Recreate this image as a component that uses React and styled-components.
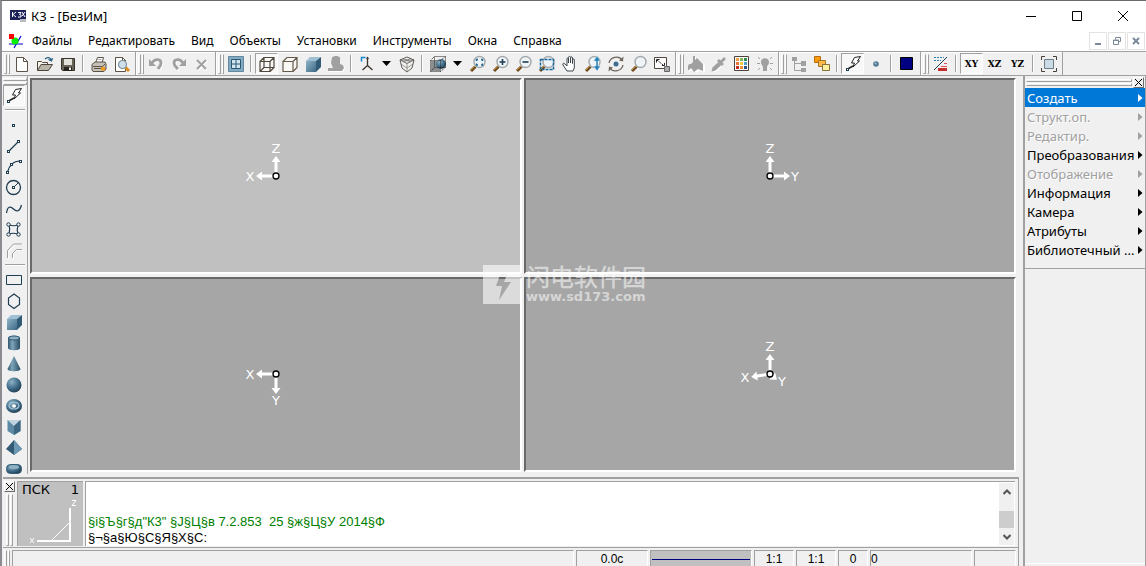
import React, { useState } from "react";
import styled, { createGlobalStyle, ThemeProvider } from "styled-components";

const theme = {
  face: "#f0f0f0",
  shadow: "#a0a0a0",
  darkShadow: "#696969",
  light: "#ffffff",
  highlight: "#0078d7",
  silver: "#c0c0c0",
  viewGrey: "#a6a6a6",
  disabled: "#a0a0a0",
  ui: `"Noto Sans", "Noto Sans CJK SC", sans-serif`,
  arial: `"Liberation Sans", Arial, sans-serif`
};

const GlobalStyle = createGlobalStyle`
  *,
  *::before,
  *::after {
    box-sizing: border-box;
  }

  body {
    margin: 0;
    overflow: hidden;
  }

  button {
    margin: 0;
    padding: 0;
    border: 0;
    background: none;
    color: inherit;
    font: inherit;
  }

  svg {
    display: block;
    flex: none;
  }
`;

const Window = styled.div`
  display: flex;
  flex-direction: column;
  height: 100vh;
  border-top: 1px solid #6a6a66;
  border-left: 2px solid #8c8c90;
  background: ${props => props.theme.face};
  color: #000;
  font-family: ${props => props.theme.ui};
  font-size: 12px;
`;

const TitleBar = styled.header`
  display: flex;
  align-items: center;
  height: 29px;
  padding-left: 8px;
  background: ${props => props.theme.light};

  h1 {
    flex: 1;
    margin: 0 0 0 5px;
    font-size: 13px;
    font-weight: 400;
  }
`;

const CaptionButton = styled.button`
  display: flex;
  align-items: center;
  justify-content: center;
  width: 46px;
  height: 29px;
`;

const MenuBar = styled.nav`
  display: flex;
  align-items: center;
  height: 21px;
  padding-left: 6px;
  background: ${props => props.theme.light};
`;

const MenuItem = styled.button`
  height: 21px;
  padding: 0 8px;
  line-height: 21px;
`;

const MenuSpacer = styled.div`
  flex: 1;
`;

const MdiButton = styled.button`
  display: flex;
  align-items: center;
  justify-content: center;
  width: 18px;
  height: 18px;
  margin-right: 1px;
  border: 1px solid #e3e3e3;
`;

const ToolBar = styled.div`
  display: flex;
  height: 25px;
  border-top: 1px solid ${props => props.theme.shadow};
  border-bottom: 1px solid ${props => props.theme.shadow};
`;

const ToolGroup = styled.div`
  display: flex;
  align-items: center;
  padding: 0 2px;
  border-right: 1px solid ${props => props.theme.shadow};
  box-shadow: inset 1px 1px 0 ${props => props.theme.light};
`;

const Grip = styled.div`
  display: flex;
  flex-direction: ${props => (props.$flat ? "column" : "row")};
  flex: ${props => (props.$grow ? "1" : "none")};
  gap: 1px;

  &::before,
  &::after {
    content: "";
    width: ${props => (props.$flat ? "100%" : "3px")};
    height: ${props => (props.$flat ? "3px" : "100%")};
    border: 1px solid;
    border-color: ${props => props.theme.light} ${props => props.theme.shadow}
      ${props => props.theme.shadow} ${props => props.theme.light};
  }
`;

const BarGrip = styled(Grip)`
  width: 6px;
  height: 20px;
`;

const ToolSeparator = styled.div`
  width: 8px;
  height: 17px;
  padding: 0 3px;

  &::before {
    content: "";
    display: block;
    width: 2px;
    height: 100%;
    border-left: 1px solid ${props => props.theme.shadow};
    border-right: 1px solid ${props => props.theme.light};
  }
`;

const ToolButton = styled.button`
  display: flex;
  align-items: center;
  justify-content: center;
  width: ${props => (props.$narrow ? "17px" : "23px")};
  height: 21px;
  border: 1px solid transparent;
  font-family: "DejaVu Serif", serif;
  font-size: 9px;
  font-weight: 700;

  &[aria-pressed="true"] {
    border-color: ${props => props.theme.shadow} ${props => props.theme.light}
      ${props => props.theme.light} ${props => props.theme.shadow};
    background: #f8f8f8;
  }
`;

const Body = styled.div`
  display: flex;
  flex: 1;
  min-height: 0;
`;

const Workspace = styled.main`
  display: flex;
  flex: 1;
  flex-direction: column;
  min-width: 0;
  padding-left: 1px;
`;

const Drawing = styled.div`
  display: flex;
  flex: 1;
  min-height: 0;
`;

const SideTools = styled.div`
  width: 25px;
  margin-bottom: 3px;
  padding-top: 2px;
  overflow: hidden;
  border-right: 1px solid ${props => props.theme.shadow};

  ${ToolButton} {
    width: 22px;
  }
`;

const SideSeparator = styled.div`
  width: 20px;
  height: 8px;
  margin-left: 2px;
  padding-top: 3px;

  &::before {
    content: "";
    display: block;
    height: 2px;
    border-top: 1px solid ${props => props.theme.shadow};
    border-bottom: 1px solid ${props => props.theme.light};
  }
`;

const Views = styled.div`
  position: relative;
  display: grid;
  flex: 1;
  grid-template-columns: 1fr 1fr;
  grid-template-rows: 1fr 1fr;
  gap: 3px 2px;
  margin: 2px 3px 5px 2px;
`;

const View = styled.section`
  display: flex;
  align-items: center;
  justify-content: center;
  overflow: hidden;
  border: 2px solid;
  border-color: ${props => props.theme.darkShadow} ${props => props.theme.light}
    ${props => props.theme.light} ${props => props.theme.darkShadow};
  background: ${props => (props.$active ? props.theme.silver : props.theme.viewGrey)};
`;

// sits over the crossing of the four views
const Watermark = styled.div`
  position: absolute;
  top: calc(50% - 12px);
  left: calc(50% - 40px);
  display: flex;
  align-items: center;
  gap: 5px;
  color: rgba(255, 255, 255, 0.55);
  font-family: "Noto Sans CJK SC", sans-serif;
  font-size: 24px;
  font-weight: 500;
  line-height: 26px;
  pointer-events: none;

  small {
    display: block;
    font-family: "DejaVu Sans", sans-serif;
    font-size: 13px;
    font-weight: 700;
    line-height: 16px;
  }
`;

const Console = styled.section`
  display: flex;
  height: 71px;
  padding: 2px 3px 1px 1px;
  border-top: 2px solid ${props => props.theme.shadow};
  border-bottom: 1px solid ${props => props.theme.shadow};
  border-right: 1px solid ${props => props.theme.shadow};
`;

const ConsoleHandle = styled.div`
  display: flex;
  flex-direction: column;
  align-items: center;
  gap: 2px;
  width: 11px;
  margin-right: 2px;
`;

const ConsoleGrip = styled(Grip)`
  flex: 1;
`;

const CloseButton = styled.button`
  display: flex;
  align-items: center;
  justify-content: center;
  width: 11px;
  height: 11px;
  border: 1px solid;
  border-color: ${props => props.theme.light} ${props => props.theme.darkShadow}
    ${props => props.theme.darkShadow} ${props => props.theme.light};
`;

const PlaneBox = styled.div`
  width: 66px;
  padding: 0 4px 0 4px;
  border-top: 1px solid ${props => props.theme.shadow};
  border-left: 1px solid ${props => props.theme.shadow};
  background: ${props => props.theme.silver};
  font-family: "DejaVu Sans", sans-serif;
  font-size: 13px;
  line-height: 15px;

  div {
    display: flex;
    justify-content: space-between;
  }

  svg {
    margin-left: 7px;
  }
`;

const LogBox = styled.div`
  display: flex;
  flex: 1;
  margin-left: 2px;
  border-top: 1px solid ${props => props.theme.shadow};
  border-left: 1px solid ${props => props.theme.shadow};
  background: ${props => props.theme.light};
`;

const LogLines = styled.div`
  display: flex;
  flex: 1;
  flex-direction: column;
  justify-content: flex-end;
  padding-left: 2px;
  font-family: ${props => props.theme.arial};
  font-size: 13px;
  line-height: 16px;
  white-space: pre;
`;

const LogLine = styled.p`
  margin: 0;
  color: ${props => (props.$info ? "#008000" : "#000")};
`;

const ScrollTrack = styled.div`
  display: flex;
  flex-direction: column;
  width: 15px;
  margin: 1px 1px 1px 0;
  background: ${props => props.theme.face};

  &::before {
    content: "";
    order: 1;
    flex: 1;
  }
`;

const ScrollButton = styled.button`
  display: flex;
  align-items: center;
  justify-content: center;
  order: ${props => (props.$down ? 3 : 0)};
  height: 17px;
`;

const ScrollThumb = styled.div`
  order: 2;
  height: 17px;
  background: #cdcdcd;
`;

const StatusBar = styled.footer`
  display: flex;
  gap: 2px;
  height: 18px;
  padding: 2px 2px 0 1px;
  border-right: 1px solid ${props => props.theme.shadow};
  font-family: ${props => props.theme.arial};
  font-size: 12px;
  line-height: 16px;
`;

const StatusCell = styled.div`
  flex: ${props => (props.$grow ? "1" : "none")};
  width: ${props => props.$width || "auto"};
  border: 1px solid;
  border-bottom: 0;
  border-color: ${props => props.theme.shadow} ${props => props.theme.light}
    ${props => props.theme.light} ${props => props.theme.shadow};
  text-align: ${props => (props.$left ? "left" : "center")};
`;

const LineSample = styled(StatusCell)`
  padding: 8px 1px 0;
  background: ${props => props.theme.silver};

  &::before {
    content: "";
    display: block;
    height: 1px;
    background: #000080;
  }
`;

const CommandPanel = styled.aside`
  display: flex;
  flex-direction: column;
  width: 123px;
  margin-left: 4px;
  padding-top: 1px;
  border-left: 2px solid ${props => props.theme.shadow};
  border-right: 1px solid ${props => props.theme.shadow};
`;

const PanelHead = styled.div`
  display: flex;
  align-items: center;
  gap: 1px;
  height: 11px;
  padding: 0 1px;
`;

const CommandList = styled.ul`
  margin: 0;
  padding: 0 0 9px;
  border-bottom: 1px solid ${props => props.theme.shadow};
  list-style: none;
`;

const CommandButton = styled.button`
  display: flex;
  align-items: center;
  justify-content: space-between;
  width: 100%;
  height: 19px;
  padding: 0 2px;
  font-size: 13px;
  line-height: 18px;
  white-space: nowrap;

  &:disabled {
    color: ${props => props.theme.disabled};
    text-shadow: 1px 1px 0 ${props => props.theme.light};
  }

  &[aria-current="true"] {
    background: ${props => props.theme.highlight};
    color: ${props => props.theme.light};
  }
`;

const PanelFoot = styled.div`
  margin-top: auto;
  height: 3px;
  border-top: 1px solid ${props => props.theme.light};
`;

const Svg = ({ size = 18, children }) => (
  <svg width={size} height={size} viewBox="0 0 18 18" fill="none" aria-hidden="true">
    {children}
  </svg>
);

const Lens = ({ children }) => (
  <Svg>
    <path d="M6.5 11.5 2 16" stroke="#6d4a1c" strokeWidth="3" />
    <path d="M6 11 2 15" stroke="#c08a3c" strokeWidth="1" />
    <circle cx="10.5" cy="7" r="5.5" fill="#eef4f7" stroke="#a3a8ab" strokeWidth="1.4" />
    {children}
  </Svg>
);

const Node = ({ x, y }) => (
  <rect x={x - 1.5} y={y - 1.5} width="2" height="2" fill="#fff" stroke="#1f3d50" />
);

const icons = {
  fresh: (
    <Svg>
      <path d="M3.5 2.5h7l4 4v10h-11z" fill="#fff" stroke="#5b5346" />
      <path d="M10.5 2.5v4h4" stroke="#5b5346" />
    </Svg>
  ),
  open: (
    <Svg>
      <path d="M1.5 15.5V6.5h4l1 1h5v2.5" fill="#f5f3ee" stroke="#4d473d" />
      <path d="m1.5 15.5 3.500-6h11.500l-4 6z" fill="#b9b4a8" stroke="#4d473d" />
      <path d="M9 4c2-2 5-2 6 1M12.500 4.500l3 1.500 1-3" stroke="#1f5b7c" strokeWidth="1.200" />
    </Svg>
  ),
  save: (
    <Svg>
      <path d="M2.500 3.500h13v12h-12l-1-1z" fill="#686258" stroke="#38332b" />
      <path d="M5 4h8v6H5z" fill="#e3e1dc" />
      <path d="M5 12h8v4H5z" fill="#26221c" />
      <path d="M10 12.500h2V15h-2z" fill="#eee" />
    </Svg>
  ),
  print: (
    <Svg>
      <path d="m5.500 8 2-5.500h6l-1.500 5.500" fill="#fff" stroke="#5b5346" />
      <path d="m2 9.500 3-2.500h10l1 2v5l-2 2.500H3l-1-1.500z" fill="#c5c1b8" stroke="#5b5346" />
      <path d="M3 11.500h9.500L15 9M4 13.500h8" stroke="#5b5346" />
      <path d="M11 12h4v3.500h-4z" fill="#f39a1e" />
      <path d="M7.500 4.500h4M7 6.500h4" stroke="#aaa" />
    </Svg>
  ),
  preview: (
    <Svg>
      <path d="M2.500 2.500h7l3 3v11h-10z" fill="#fff" stroke="#5b5346" />
      <path d="M9.500 2.500v3h3" stroke="#5b5346" />
      <path d="m12 12 4 4" stroke="#db8b1b" strokeWidth="3" />
      <circle cx="9.500" cy="9.500" r="4" fill="#cfe0ea" stroke="#7c93a0" strokeWidth="1.200" />
    </Svg>
  ),
  undo: (
    <Svg>
      <path d="M5 8c3-5 9-4 9 0 0 3-2 4-3 6" stroke="#fff" strokeWidth="2.500" transform="translate(1 1)" />
      <path d="M5 8c3-5 9-4 9 0 0 3-2 4-3 6" stroke="#a0a0a0" strokeWidth="2.800" />
      <path d="M2 4v7h7z" fill="#a0a0a0" />
    </Svg>
  ),
  redo: (
    <Svg>
      <path d="M13 8C10 3 4 4 4 8c0 3 2 4 4 6" stroke="#fff" strokeWidth="2.500" transform="translate(1 1)" />
      <path d="M13 8C10 3 4 4 4 8c0 3 2 4 4 6" stroke="#a0a0a0" strokeWidth="2.800" />
      <path d="M16 4v7H9z" fill="#a0a0a0" />
    </Svg>
  ),
  remove: (
    <Svg>
      <path d="m5 6 9 9m0-9-9 9" stroke="#fff" strokeWidth="2" />
      <path d="m4 5 9 9m0-9-9 9" stroke="#a0a0a0" strokeWidth="2" />
    </Svg>
  ),
  window: (
    <Svg>
      <path d="M1.500 1.500h15v15h-15z" fill="#85abc2" stroke="#6387a0" />
      <path d="M4.500 4.500h9v9h-9zM9 4.500v9M4.500 9h9" fill="#d3e5ee" stroke="#275875" />
    </Svg>
  ),
  wire: (
    <Svg>
      <path d="M2 6.500h10v10H2zM6 2.500h10v10H6zM2 6.500l4-4m6 4 4-4m-4 14 4-4m-14 4 4-4" stroke="#51483d" strokeWidth="1.200" />
    </Svg>
  ),
  box: (
    <Svg>
      <path d="M2 6.500h10v10H2zM2 6.500l4-4h10v10l-4 4m0-10 4-4" fill="#f9f8f5" stroke="#655a4a" strokeWidth="1.200" />
    </Svg>
  ),
  cube: (
    <Svg>
      <path d="m2 6 4-4h11l-5 4z" fill="#9fc0d2" />
      <path d="M2 6h10v11H2z" fill="url(#steel)" />
      <path d="m12 6 5-4v10l-5 5z" fill="#315a74" />
    </Svg>
  ),
  shade: (
    <Svg>
      <path d="M5 3h8v6l4 1 1 3-2 4H2v-3h4V9L5 8z" fill="#fff" />
      <path d="M5 2.500c2-2 6-2 8 0V9l3 1 1 3-2 3H1v-3h5l-2-5z" fill="#a0a0a0" />
    </Svg>
  ),
  axes: (
    <Svg>
      <path d="M9.500 2v8.500L4.500 15m5-4.500 5 4.500" stroke="#3c342c" strokeWidth="1.300" />
      <path d="M3.500 6.500v-4h4" stroke="#1686ce" strokeWidth="1.500" />
      <path d="M8 4h3L9.500 1.500z" fill="#3c342c" />
    </Svg>
  ),
  drop: (
    <svg width="9" height="5" viewBox="0 0 9 5" aria-hidden="true">
      <path d="M0 0h9L4.500 5z" fill="#000" />
    </svg>
  ),
  gem: (
    <Svg>
      <path d="m2 5 7-3 7 3-2 8-5 4-5-4z" fill="#f2f2f0" stroke="#5f5d5a" />
      <path d="m2 5 7 3.500L16 5z" fill="#dcdcda" stroke="#5a5855" strokeWidth=".8" />
      <path d="M9 8.500V17M5.500 3.500l7 3.500m0-3.500L5.500 7M3 9l6 4 6-4" stroke="#77746f" strokeWidth=".7" />
    </Svg>
  ),
  dotted: (
    <Svg>
      <path d="M2 6h9v10H2z" fill="#8b8f92" />
      <circle cx="12" cy="9" r="5" fill="url(#ball)" />
      <path d="M1.500 5.500h10v11h-10zM5.500 1.500h11v11h-11zM1.500 5.500l4-4m6 4 5-4m-5 15 5-4m-15 4 4-4" stroke="#222" strokeDasharray="1 1" />
    </Svg>
  ),
  zoomFit: (
    <Lens>
      <path d="M7.500 6V4.500H9M12 4.500h1.500V6m0 2.500V10H12m-3 0H7.500V8.500" stroke="#1f6795" strokeWidth="1.400" />
    </Lens>
  ),
  zoomIn: (
    <Lens>
      <path d="M7.500 7h6m-3-3v6" stroke="#1c3d52" strokeWidth="1.600" />
    </Lens>
  ),
  zoomOut: (
    <Lens>
      <path d="M7.500 7h6" stroke="#1c3d52" strokeWidth="1.600" />
    </Lens>
  ),
  zoomArea: (
    <Lens>
      <path d="M2.500 4.500h13v10h-13z" stroke="#15679a" strokeWidth="1.500" strokeDasharray="3 1" />
    </Lens>
  ),
  hand: (
    <Svg>
      <path
        d="m6 16-4-6c-1-2 1-2 2-1l2 2V4c0-1.500 1.500-1.500 1.500 0v4V2.500c0-1.500 2-1.500 2 0V8 3c0-1.500 2-1.500 2 0v5.500V5c0-1.500 1.800-1.500 1.800 0v8L12 16z"
        fill="#fff"
        stroke="#39444b"
      />
    </Svg>
  ),
  zoomDrag: (
    <Lens>
      <path d="m13 1 3.500 5H14v5h2.500L13 16l-3.500-5H12V6H9.500z" fill="#2982b8" stroke="#e9f3f8" strokeWidth=".5" />
    </Lens>
  ),
  orbit: (
    <Svg>
      <path d="M2 8c1-6 10-8 13-3M16 10c-1 6-10 8-13 3" stroke="#6e675d" strokeWidth="1.300" />
      <path d="m16.500 1.500-.5 5-4-1zM1.500 16.500l.5-5 4 1z" fill="#6e675d" />
      <circle cx="9" cy="9" r="2.500" fill="#3b6e8f" />
    </Svg>
  ),
  zoomPlain: <Lens />,
  extent: (
    <Svg>
      <path d="M1.500 2.500h12v11h-12z" fill="#fcfcfa" stroke="#4f4941" />
      <path d="M11.500 11.500h5v5h-5z" fill="#aaa" stroke="#666" />
      <path d="m4 5 6 5" stroke="#222" strokeDasharray="2 1" />
      <path d="M3.500 7.500v-3h3M11.500 8v2.500H9" stroke="#222" />
    </Svg>
  ),
  bucket: (
    <Svg>
      <path d="m6 9 5-6 6 6v8l-5-2-4 2-3-4-2 2H1c0-5 1-6 5-6zM6 1h2v7H6z" fill="#fff" transform="translate(1 1)" />
      <path d="m4 9 6-6 6 6v7l-5-2-4 3-3-4-2 2H1c0-5 0-6 3-6zM6 1h2v7H6z" fill="#a0a0a0" />
    </Svg>
  ),
  pipette: (
    <Svg>
      <path d="m3 16 8-8" stroke="#fff" strokeWidth="3" transform="translate(1 1)" />
      <path d="m1.500 16.500 1-4 6-5.500 3 3-6 5.500z" fill="#a0a0a0" />
      <path d="m8 5 5 5m-2.500-2.500 4.500-4.500" stroke="#a0a0a0" strokeWidth="2.800" />
    </Svg>
  ),
  palette: (
    <Svg>
      <path d="M1.500 1.500h14v14h-14z" fill="#fff" stroke="#4d4339" />
      <path d="M3 3h3v3H3z" fill="#e9a14a" />
      <path d="M7 3h3v3H7z" fill="#7fb75d" />
      <path d="M11 3h3v3h-3z" fill="#2f8c4c" />
      <path d="M3 7h3v3H3z" fill="#e8743a" />
      <path d="M7 7h3v3H7z" fill="#efc93e" />
      <path d="M11 7h3v3h-3z" fill="#4ea0c7" />
      <path d="M3 11h3v3H3z" fill="#c72b22" />
      <path d="M7 11h3v3H7z" fill="#e9913b" />
      <path d="M11 11h3v3h-3z" fill="#2b4f86" />
    </Svg>
  ),
  bulb: (
    <Svg>
      <path d="M5 7c0-5 8-5 8 0 0 3-2 3-2 6v3H7v-3c0-3-2-3-2-6z" fill="#a0a0a0" />
      <path d="m2 2 2 2m12-2-2 2M1 8.500h3m10 0h3M2 15l2-2m12 2-2-2" stroke="#a0a0a0" />
    </Svg>
  ),
  tree: (
    <Svg>
      <path d="M4.500 6v9.500H12M4.500 8.500H12" stroke="#a0a0a0" />
      <path d="M2 2h5v4H2zM11 6h5v5h-5zM11 13h5v4h-5z" fill="#a0a0a0" />
    </Svg>
  ),
  layers: (
    <Svg>
      <path d="M1.500 1.500h6v6h-6z" fill="#ff9a0b" stroke="#b86c10" />
      <path d="M5.500 5.500h7v6h-7z" fill="#ffb84a" stroke="#a8742a" />
      <path d="M9.500 9.500h7v6h-7z" fill="#fff0a0" stroke="#857038" />
    </Svg>
  ),
  snap: (
    <Svg>
      <path d="m10.500 2.500 6-1-3 4.500h2L9 12l1.500-4h-3z" fill="#fff" stroke="#222" />
      <path d="M4.500 13.500 9 11" stroke="#222" strokeWidth="1.500" />
      <Node x={4} y={15} />
    </Svg>
  ),
  bead: (
    <Svg>
      <circle cx="9" cy="9" r="2.800" fill="#527c94" />
      <circle cx="8.500" cy="8.500" r="1" fill="#9bc3d6" />
    </Svg>
  ),
  navy: (
    <Svg>
      <path d="M2.500 2.500h12v12h-12z" fill="#000080" stroke="#000" />
    </Svg>
  ),
  lineStyle: (
    <Svg>
      <path d="M2 2.500h10M2 5.500h7" stroke="#2686ad" strokeDasharray="2 1" />
      <path d="m2 15 13-13" stroke="#1f3d50" />
      <path d="M12 8.500h3M9 11.500h6" stroke="#e05151" />
      <path d="M6 14.500h9" stroke="#c42d2d" strokeWidth="3" />
    </Svg>
  ),
  frame: (
    <Svg>
      <path d="M4.500 4.500h9v9h-9z" fill="#c9dce8" stroke="#6f7d84" />
      <path d="M1.500 5V1.500H5M13 1.500h3.500V5m0 8v3.500H13m-8 0H1.500V13" stroke="#453f36" />
    </Svg>
  ),
  point: (
    <Svg>
      <Node x={9} y={10} />
    </Svg>
  ),
  line: (
    <Svg>
      <path d="m4 14 9-9" stroke="#1f3d50" strokeWidth="1.200" />
      <Node x={4} y={15} />
      <Node x={14} y={5} />
    </Svg>
  ),
  arc: (
    <Svg>
      <path d="M2.500 14.500C4 8 8 3 15 3" stroke="#1f3d50" strokeWidth="1.200" />
      <Node x={3} y={15} />
      <Node x={7} y={7} />
      <Node x={16} y={4} />
    </Svg>
  ),
  circle: (
    <Svg>
      <circle cx="8.500" cy="8.500" r="7" stroke="#1f3d50" strokeWidth="1.300" />
      <path d="m9 8 4-4" stroke="#1f3d50" />
      <Node x={9} y={9} />
    </Svg>
  ),
  spline: (
    <Svg>
      <path d="M1.500 13c1-7 4-7 7-4s6 3 8-4" stroke="#1f3d50" strokeWidth="1.300" />
    </Svg>
  ),
  contour: (
    <Svg>
      <path d="M4 4q5 1.500 9 0-1.500 5 0 9-5-1.500-9 0 1.500-5 0-9z" stroke="#1f3d50" strokeWidth="1.200" />
      <g fill="#f0f0f0" stroke="#1f3d50">
        <circle cx="3.500" cy="3.500" r="1.700" />
        <circle cx="13.500" cy="3.500" r="1.700" />
        <circle cx="3.500" cy="13.500" r="1.700" />
        <circle cx="13.500" cy="13.500" r="1.700" />
      </g>
    </Svg>
  ),
  offset: (
    <Svg>
      <path d="M3.500 17V9.500l7-7H18M8.500 17v-5l4-4H18" stroke="#fff" />
      <path d="M2.500 16V8.500l6-6.500H17M7.500 16v-4.500l4-4H17" stroke="#a0a0a0" />
    </Svg>
  ),
  rect: (
    <Svg>
      <path d="M1.500 4.500h15v9h-15z" stroke="#1f3d50" />
    </Svg>
  ),
  hexagon: (
    <Svg>
      <path d="m9 2 5.500 4v6.500L9 16.500l-5.500-4V6z" stroke="#1f3d50" strokeWidth="1.200" />
    </Svg>
  ),
  cylinder: (
    <Svg>
      <path d="M3 4c0-3 12-3 12 0v10c0 3-12 3-12 0z" fill="url(#side)" />
      <ellipse cx="9" cy="4" rx="5.500" ry="2" fill="#8eb0c3" stroke="#315a74" />
    </Svg>
  ),
  cone: (
    <Svg>
      <path d="m9 1 6.500 13c0 3-13 3-13 0z" fill="url(#side)" />
    </Svg>
  ),
  sphere: (
    <Svg>
      <circle cx="9" cy="9" r="7.500" fill="url(#ball)" />
    </Svg>
  ),
  torus: (
    <Svg>
      <ellipse cx="9" cy="9" rx="8" ry="7" fill="url(#ball)" />
      <path d="M4 9c0-5 10-5 10 0-1 4-9 4-10 0z" stroke="#a4c4d5" strokeWidth="1.200" />
      <ellipse cx="9" cy="9" rx="2" ry="1.700" fill="#fff" />
    </Svg>
  ),
  prism: (
    <Svg>
      <path d="M2.500 2h13v11L9 17l-6.500-4z" fill="#5d89a4" />
      <path d="M2.500 2h13L9 8z" fill="#bfd4df" />
      <path d="M9 8v9l6.500-4V2z" fill="#3d6680" />
    </Svg>
  ),
  pyramid: (
    <Svg>
      <path d="m9 1 8 9-8 6-8-6z" fill="#315a74" />
      <path d="m9 1 8 9-8 6z" fill="#6c98b3" />
    </Svg>
  ),
  capsule: (
    <Svg>
      <rect x="1.500" y="4.500" width="15" height="9" rx="4" fill="url(#ball)" stroke="#315a74" />
      <ellipse cx="9" cy="7" rx="5" ry="2" fill="#8eb0c3" />
    </Svg>
  )
};

const Gradients = () => (
  <svg width="0" height="0" aria-hidden="true">
    <defs>
      <linearGradient id="steel" x1="0" y1="0" x2="1" y2="1">
        <stop offset="0" stopColor="#8db2c6" />
        <stop offset="1" stopColor="#3e6a87" />
      </linearGradient>
      <linearGradient id="side">
        <stop offset="0" stopColor="#32566c" />
        <stop offset=".35" stopColor="#7ea5ba" />
        <stop offset="1" stopColor="#284c62" />
      </linearGradient>
      <radialGradient id="ball" cx=".35" cy=".3" r=".75">
        <stop offset="0" stopColor="#8db2c6" />
        <stop offset=".6" stopColor="#3e6a87" />
        <stop offset="1" stopColor="#213f52" />
      </radialGradient>
    </defs>
  </svg>
);

const Cross = () => (
  <svg width="7" height="7" viewBox="0 0 7 7" aria-hidden="true">
    <path d="m0 0 7 7M7 0 0 7" stroke="#000" />
  </svg>
);

// an axis is drawn from the centre of an 80 x 80 field
const AxisMark = ({ axes }) => (
  <svg width="80" height="80" viewBox="0 0 80 80" aria-hidden="true">
    {axes.map(({ name, angle, length, x, y }) => (
      <g key={name}>
        <g transform={`translate(40 40) rotate(${angle})`}>
          <path d={`M0-1.500h${length - 5}v-3l6 4.500-6 4.500v-3H0z`} fill="#fff" />
        </g>
        <text x={x} y={y} fill="#fff" textAnchor="middle" fontFamily="DejaVu Sans" fontSize="13">
          {name}
        </text>
      </g>
    ))}
    <circle cx="40" cy="40" r="3" fill="#fff" stroke="#000" strokeWidth="1.300" />
  </svg>
);

const up = { name: "Z", angle: -90, length: 19, x: 40, y: 17 };
const left = { name: "X", angle: 180, length: 19, x: 14, y: 45 };

const views = [
  { id: "front", label: "Вид спереди", axes: [up, left] },
  { id: "side", label: "Вид слева", axes: [up, { name: "Y", angle: 0, length: 19, x: 65, y: 45 }] },
  { id: "top", label: "Вид сверху", axes: [left, { name: "Y", angle: 90, length: 19, x: 40, y: 71 }] },
  {
    id: "iso",
    label: "Аксонометрия",
    axes: [
      up,
      { name: "X", angle: 171, length: 18, x: 15, y: 48 },
      { name: "Y", angle: 40, length: 8, x: 52, y: 52 }
    ]
  }
];

const menus = ["Файлы", "Редактировать", "Вид", "Объекты", "Установки", "Инструменты", "Окна", "Справка"];

const toolGroups = [
  ["fresh", "open", "save", "|", "print", "preview"],
  ["undo", "redo", "remove"],
  [
    "window", "|", "wire", "box", "cube", "shade", "|", "axes", "drop", "gem", "|", "dotted", "drop",
    "zoomFit", "zoomIn", "zoomOut", "zoomArea", "hand", "zoomDrag", "orbit", "zoomPlain", "extent"
  ],
  ["bucket", "pipette", "palette", "bulb"],
  ["tree", "layers", "|", "snap", "bead", "|", "navy"],
  ["lineStyle", "|", "XY", "XZ", "YZ", "|", "frame"]
];

const sideTools = [
  "snap", "|", "point", "line", "arc", "circle", "spline", "contour", "offset", "|", "rect", "hexagon",
  "cube", "cylinder", "cone", "sphere", "torus", "prism", "pyramid", "capsule"
];

const commands = [
  { label: "Создать" },
  { label: "Структ.оп.", disabled: true },
  { label: "Редактир.", disabled: true },
  { label: "Преобразования" },
  { label: "Отображение", disabled: true },
  { label: "Информация" },
  { label: "Камера" },
  { label: "Атрибуты" },
  { label: "Библиотечный ..." }
];

const Tool = ({ name, pressed, onClick }) => (
  <ToolButton $narrow={name === "drop"} aria-label={name} aria-pressed={pressed} onClick={onClick}>
    {icons[name] || name}
  </ToolButton>
);

const App = () => {
  const [mode, setMode] = useState("wire");
  const [plane, setPlane] = useState("XY");
  const [snap, setSnap] = useState(true);
  const [command, setCommand] = useState("Создать");

  const isPressed = name => name === mode || name === plane || (name === "snap" && snap);

  const press = name => {
    if (["wire", "box", "cube"].includes(name)) setMode(name);
    if (["XY", "XZ", "YZ"].includes(name)) setPlane(name);
    if (name === "snap") setSnap(!snap);
  };

  return (
    <ThemeProvider theme={theme}>
      <GlobalStyle />
      <Window>
        <TitleBar>
          <svg width="16" height="12" viewBox="0 0 16 12" aria-hidden="true">
            <path d="M0 0h16v10H0z" fill="#1c2158" />
            <path d="M2.500 2v5M6 2 3 4.500 6 7M8 2.500h3L9.500 4.500 11 5v2H8M12 2l3 5m0-5-3 4" stroke="#fff" fill="none" />
            <path d="M10 9h6v3h-6z" fill="#bbb" />
          </svg>
          <h1>К3 - [БезИм]</h1>
          <CaptionButton aria-label="Свернуть">
            <svg width="10" height="10" viewBox="0 0 10 10">
              <path d="M0 5.500h10" stroke="#000" />
            </svg>
          </CaptionButton>
          <CaptionButton aria-label="Развернуть">
            <svg width="10" height="10" viewBox="0 0 10 10">
              <path d="M.5.5h9v9h-9z" stroke="#000" fill="none" />
            </svg>
          </CaptionButton>
          <CaptionButton aria-label="Закрыть">
            <svg width="10" height="10" viewBox="0 0 10 10">
              <path d="m0 0 10 10m0-10L0 10" stroke="#000" />
            </svg>
          </CaptionButton>
        </TitleBar>

        <MenuBar>
          <svg width="16" height="16" viewBox="0 0 16 16" aria-hidden="true">
            <path d="M1 11h14M6 15l7-12" stroke="#0000d8" strokeWidth="1.200" />
            <circle cx="7" cy="8" r="3.500" fill="#00f000" />
            <path d="M1 1h5v5H1z" fill="#f00" />
          </svg>
          {menus.map(menu => (
            <MenuItem key={menu}>{menu}</MenuItem>
          ))}
          <MenuSpacer />
          <MdiButton aria-label="Свернуть окно">
            <svg width="8" height="8" viewBox="0 0 8 8">
              <path d="M1 7h6" stroke="#7b8a9a" strokeWidth="2" />
            </svg>
          </MdiButton>
          <MdiButton aria-label="Восстановить окно">
            <svg width="8" height="8" viewBox="0 0 8 8" fill="none" stroke="#7b8a9a">
              <path d="M2.500 2.500V.500h5v4h-2" />
              <path d="M.500 3h5v4.500h-5zM.500 3.500h5" />
            </svg>
          </MdiButton>
          <MdiButton aria-label="Закрыть окно">
            <svg width="8" height="8" viewBox="0 0 8 8">
              <path d="m1 1 6 6m0-6L1 7" stroke="#7b8a9a" strokeWidth="2" />
            </svg>
          </MdiButton>
        </MenuBar>

        <ToolBar role="toolbar">
          {toolGroups.map((group, g) => (
            <ToolGroup key={g}>
              <BarGrip />
              {group.map((name, i) =>
                name === "|" ? (
                  <ToolSeparator key={i} />
                ) : (
                  <Tool key={i} name={name} pressed={isPressed(name)} onClick={() => press(name)} />
                )
              )}
            </ToolGroup>
          ))}
        </ToolBar>

        <Body>
          <Workspace>
            <Drawing>
              <SideTools role="toolbar">
                <Grip $flat />
                {sideTools.map((name, i) =>
                  name === "|" ? (
                    <SideSeparator key={i} />
                  ) : (
                    <Tool key={i} name={name} pressed={name === "snap" && snap} onClick={() => press(name)} />
                  )
                )}
              </SideTools>
              <Views>
                {views.map(view => (
                  <View key={view.id} aria-label={view.label} $active={view.id === "front"}>
                    <AxisMark axes={view.axes} />
                  </View>
                ))}
                <Watermark>
                  <svg width="38" height="39" viewBox="0 0 38 39" aria-hidden="true">
                    <path
                      d="M0 0h38v39H0zM18 7l-5 14h6l-3 14 12-18h-7l4-10z"
                      fill="#fff"
                      fillOpacity=".6"
                      fillRule="evenodd"
                    />
                  </svg>
                  <div>
                    闪电软件园
                    <small>www.sd173.com</small>
                  </div>
                </Watermark>
              </Views>
            </Drawing>

            <Console>
              <ConsoleHandle>
                <CloseButton aria-label="Закрыть консоль">
                  <Cross />
                </CloseButton>
                <ConsoleGrip />
              </ConsoleHandle>
              <PlaneBox>
                <div>
                  <span>ПСК</span>
                  <span>1</span>
                </div>
                <svg width="50" height="48" viewBox="0 0 50 48" aria-hidden="true">
                  <path d="M8 44h34M41 45V11" stroke="#fff" strokeWidth="2" />
                  <path d="m22 44 19-19" stroke="#fff" />
                  <path d="m1 41 4 5m0-5-4 5M43 3.500h4l-4 5h4" stroke="#fff" fill="none" />
                </svg>
              </PlaneBox>
              <LogBox>
                <LogLines role="log">
                  <LogLine $info>{'§i§Ъ§г§д"К3" §J§Ц§в 7.2.853  25 §ж§Ц§У 2014§Ф'}</LogLine>
                  <LogLine>§¬§а§Ю§С§Я§Х§С:</LogLine>
                </LogLines>
                <ScrollTrack>
                  <ScrollButton aria-label="Вверх">
                    <svg width="8" height="6" viewBox="0 0 8 6">
                      <path d="m.500 5 3.500-3.500L7.500 5" stroke="#555" strokeWidth="2" fill="none" />
                    </svg>
                  </ScrollButton>
                  <ScrollThumb />
                  <ScrollButton $down aria-label="Вниз">
                    <svg width="8" height="6" viewBox="0 0 8 6">
                      <path d="M.500 1 4 4.500 7.500 1" stroke="#555" strokeWidth="2" fill="none" />
                    </svg>
                  </ScrollButton>
                </ScrollTrack>
              </LogBox>
            </Console>

            <StatusBar>
              <BarGrip />
              <StatusCell $grow />
              <StatusCell $width="72px">0.0c</StatusCell>
              <LineSample $width="102px" />
              <StatusCell $width="40px">1:1</StatusCell>
              <StatusCell $width="40px">1:1</StatusCell>
              <StatusCell $width="30px">0</StatusCell>
              <StatusCell $width="102px" $left>
                0
              </StatusCell>
              <StatusCell $width="42px" />
            </StatusBar>
          </Workspace>

          <CommandPanel>
            <PanelHead>
              <Grip $flat $grow />
              <CloseButton aria-label="Закрыть панель">
                <Cross />
              </CloseButton>
            </PanelHead>
            <CommandList>
              {commands.map(({ label, disabled }) => (
                <li key={label}>
                  <CommandButton
                    disabled={disabled}
                    aria-current={label === command}
                    onClick={() => setCommand(label)}
                  >
                    {label}
                    <svg width="5" height="8" viewBox="0 0 5 8" aria-hidden="true">
                      <path d="M0 0v8l4.500-4z" fill="currentColor" />
                    </svg>
                  </CommandButton>
                </li>
              ))}
            </CommandList>
            <PanelFoot />
          </CommandPanel>
        </Body>
      </Window>
      <Gradients />
    </ThemeProvider>
  );
};

export default App;
